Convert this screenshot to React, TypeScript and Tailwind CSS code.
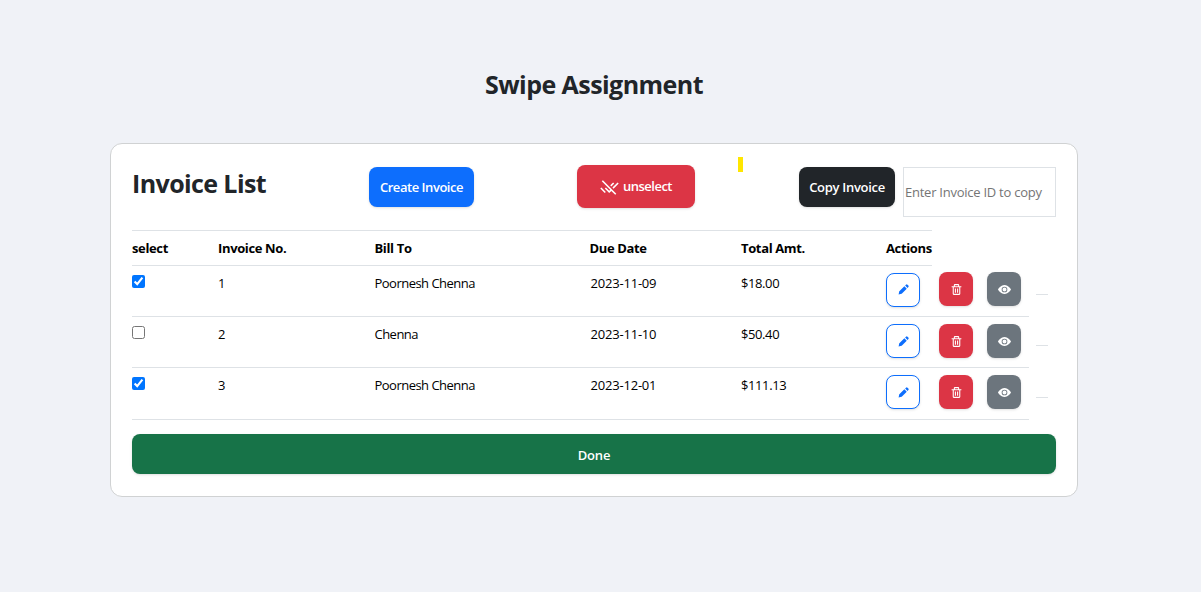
import React, { useState } from 'react';
import { BiSolidPencil, BiTrash } from 'react-icons/bi';
import { BsEyeFill } from 'react-icons/bs';
import { MdRemoveDone } from 'react-icons/md';

type Invoice = { id: number; billTo: string; due: string; total: string; height: string; lift: string; pencil: string; rule: string };

const invoices: Invoice[] = [
  { id: 1, billTo: 'Poornesh Chenna', due: '2023-11-09', total: '$18.00', height: 'h-[51px]', lift: 'mt-1.5', pencil: 'pb-px', rule: 'h-[29px]' },
  { id: 2, billTo: 'Chenna', due: '2023-11-10', total: '$50.40', height: 'h-[51px]', lift: 'mt-[7px]', pencil: '', rule: 'h-[29px]' },
  { id: 3, billTo: 'Poornesh Chenna', due: '2023-12-01', total: '$111.13', height: 'h-[52px]', lift: 'mt-[7px]', pencil: '', rule: 'h-[30px]' },
];

const columns = 'grid grid-cols-[86px_156.5px_215px_151.5px_145px_auto]';
const iconButton = 'flex size-[34px] shrink-0 items-center justify-center rounded-lg shadow-sm';

function Row({ invoice, checked, onToggle }: { invoice: Invoice; checked: boolean; onToggle: () => void }) {
  return (
    <div className={`flex ${invoice.height}`}>
      <div className={`${columns} w-[897px] shrink-0 border-b border-[#dee2e6] text-[13px] leading-[20px] text-black`}>
        <div className="pt-[9px]">
          <input type="checkbox" checked={checked} onChange={onToggle} className="block size-[13px] accent-[#0075ff]" />
        </div>
        <div className="pt-[7px]">{invoice.id}</div>
        <div className="pt-[7px] tracking-[-0.52px]">{invoice.billTo}</div>
        <div className="pt-[7px] pl-px tracking-[-0.2px]">{invoice.due}</div>
        <div className="pt-[7px] tracking-[-0.4px]">{invoice.total}</div>
        <div className="flex items-start">
          <button className={`${iconButton} ${invoice.pencil} mt-[7px] border border-[#0d6efd] bg-white text-[#0d6efd]`}>
            <BiSolidPencil size={13} />
          </button>
          <button className={`${iconButton} ${invoice.lift} ml-[19px] bg-[#dc3545] text-white`}>
            <BiTrash size={13} />
          </button>
          <button className={`${iconButton} ${invoice.lift} ml-3.5 bg-[#6c757d] text-white`}>
            <BsEyeFill size={13} />
          </button>
        </div>
      </div>
      <div className={`${invoice.rule} ml-[7px] w-3 border-b border-[#dee2e6]`} />
    </div>
  );
}

export default function App() {
  const [selected, setSelected] = useState<number[]>([1, 3]);
  const toggle = (id: number) =>
    setSelected((s) => (s.includes(id) ? s.filter((n) => n !== id) : [...s, id]));

  return (
    <div className="h-screen overflow-hidden bg-[#f0f2f7] pl-[110px] pt-16 font-['Open_Sans','Noto_Sans',sans-serif] text-[#212529]">
      <h1 className="w-[968px] text-center text-[25px] font-bold leading-10 tracking-[-0.55px]">Swipe Assignment</h1>
      <main className="mt-[39px] h-[354px] w-[968px] rounded-xl border border-[#d0d2d3] bg-white px-[21px]">
        <header className="flex h-[86px] items-start">
          <h2 className="w-[237px] pt-[19px] text-[25px] font-bold leading-10 tracking-[-0.6px]">Invoice List</h2>
          <button className="mt-[23px] h-10 w-[105px] rounded-lg bg-[#0d6efd] pt-0.5 text-[13px] font-semibold tracking-[-0.46px] text-white shadow-sm">
            Create Invoice
          </button>
          <button
            onClick={() => setSelected([])}
            className="ml-[103px] mt-[21px] flex h-[43px] w-[118px] items-center justify-center gap-1 rounded-lg bg-[#dc3545] text-[13px] font-semibold tracking-[-0.5px] text-white shadow-sm"
          >
            <MdRemoveDone size={19} className="mt-0.5" />
            unselect
          </button>
          <span className="ml-[43px] mt-[13px] h-[15px] w-[5px] bg-[#ffe600]" />
          <button className="ml-14 mt-[23px] h-10 w-24 rounded-lg bg-[#212529] pt-0.5 text-[13px] font-semibold tracking-[-0.3px] text-white shadow-sm">
            Copy Invoice
          </button>
          <input
            placeholder="Enter Invoice ID to copy"
            className="ml-2 mt-[23px] h-[50px] w-[153px] border border-[#dee2e6] px-px text-[13px] tracking-[-0.25px] placeholder:text-[#757575]"
          />
        </header>
        <section>
          <div className={`${columns} h-9 w-[800px] border-y border-[#dee2e6] text-[13px] font-bold leading-[34px] tracking-[-0.36px] text-black`}>
            <span>select</span>
            <span>Invoice No.</span>
            <span>Bill To</span>
            <span>Due Date</span>
            <span>Total Amt.</span>
            <span>Actions</span>
          </div>
          {invoices.map((inv) => (
            <Row key={inv.id} invoice={inv} checked={selected.includes(inv.id)} onToggle={() => toggle(inv.id)} />
          ))}
        </section>
        <button className="mt-3.5 block h-10 w-full rounded-lg bg-[#177348] pt-[3px] text-[13px] font-semibold tracking-[-0.2px] text-white shadow-sm">Done</button>
      </main>
    </div>
  );
}
